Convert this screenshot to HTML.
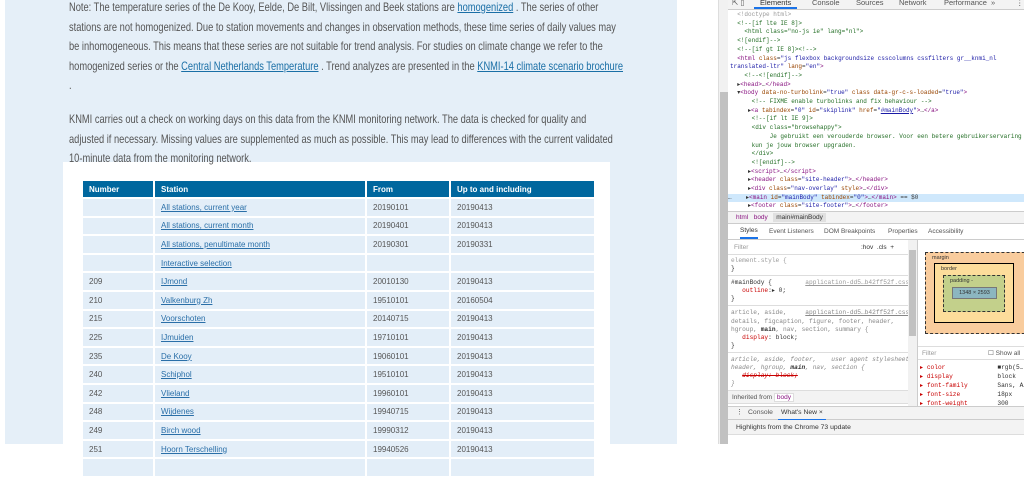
<!DOCTYPE html>
<html><head><meta charset="utf-8"><style>
*{margin:0;padding:0;box-sizing:border-box}
body{width:1024px;height:444px;overflow:hidden;background:#fff;position:relative;font-family:"Liberation Sans",sans-serif}
#page{position:absolute;left:5px;top:0;width:672px;height:444px;background:#e5eff8}
.p{position:absolute;left:64px;font-size:12px;line-height:19.6px;color:#555;white-space:nowrap;transform:scaleX(0.775);transform-origin:0 0;z-index:2}
a{color:#1a6fa6;text-decoration:underline}
#box{position:absolute;left:63px;top:162px;width:547px;height:290px;background:#fff}
table{position:absolute;left:18px;top:17px;border-collapse:collapse;font-size:8px;width:515px}
td,th{border:2px solid #fff;height:18.6px;padding:0 0 0 6px;text-align:left;background:#e3eef8;color:#555;white-space:nowrap}
th{background:#00679e;color:#fff;font-weight:bold;height:18px}
td a{color:#2a6fa8}
#sb{position:absolute;left:718px;top:0;width:10px;height:444px;background:#f1f1f1;border-left:1px solid #ddd}
#sb div{position:absolute;left:1px;top:92px;width:8px;height:352px;background:#c1c1c1}
#dt{position:absolute;left:728px;top:0;width:296px;height:444px;background:#fff;font-size:7.6px;color:#333;overflow:hidden}
.mono{font-family:"Liberation Mono",monospace}
.tabs{position:absolute;left:0;top:0;width:296px;height:10px;background:#f3f3f3;border-bottom:1px solid #ccc;color:#555;font-size:7.5px;line-height:6px;white-space:nowrap}
.el{position:absolute;left:2px;top:11px;width:296px;white-space:pre;line-height:8.7px;font-size:6px}
.tg{color:#881280}.at{color:#994500}.av{color:#1a1aa6}.cm{color:#236e25}.gr{color:#999}
.ab{position:absolute;width:296px;background:#f3f3f3;border-top:1px solid #ccc;border-bottom:1px solid #ccc}
.sp{font-size:6.2px}
</style></head><body>
<div id="page">
<div class="p" style="top:-2px">Note: The temperature series of the De Kooy, Eelde, De Bilt, Vlissingen and Beek stations are <a>homogenized</a> . The series of other<br>stations are not homogenized. Due to station movements and changes in observation methods, these time series of daily values may<br>be inhomogeneous. This means that these series are not suitable for trend analysis. For studies on climate change we refer to the<br>homogenized series or the <a>Central Netherlands Temperature</a> . Trend analyzes are presented in the <a>KNMI-14 climate scenario brochure</a><br>.</div>
<div class="p" style="top:110px">KNMI carries out a check on working days on this data from the KNMI monitoring network. The data is checked for quality and<br>adjusted if necessary. Missing values are supplemented as much as possible. This may lead to differences with the current validated<br>10-minute data from the monitoring network.</div>
</div>
<div id="box"><table>
<tr><th style="width:72px">Number</th><th style="width:212px">Station</th><th style="width:84px">From</th><th>Up to and including</th></tr>
<tr><td></td><td><a>All stations, current year</a></td><td>20190101</td><td>20190413</td></tr>
<tr><td></td><td><a>All stations, current month</a></td><td>20190401</td><td>20190413</td></tr>
<tr><td></td><td><a>All stations, penultimate month</a></td><td>20190301</td><td>20190331</td></tr>
<tr><td></td><td><a>Interactive selection</a></td><td></td><td></td></tr>
<tr><td>209</td><td><a>IJmond</a></td><td>20010130</td><td>20190413</td></tr>
<tr><td>210</td><td><a>Valkenburg Zh</a></td><td>19510101</td><td>20160504</td></tr>
<tr><td>215</td><td><a>Voorschoten</a></td><td>20140715</td><td>20190413</td></tr>
<tr><td>225</td><td><a>IJmuiden</a></td><td>19710101</td><td>20190413</td></tr>
<tr><td>235</td><td><a>De Kooy</a></td><td>19060101</td><td>20190413</td></tr>
<tr><td>240</td><td><a>Schiphol</a></td><td>19510101</td><td>20190413</td></tr>
<tr><td>242</td><td><a>Vlieland</a></td><td>19960101</td><td>20190413</td></tr>
<tr><td>248</td><td><a>Wijdenes</a></td><td>19940715</td><td>20190413</td></tr>
<tr><td>249</td><td><a>Birch wood</a></td><td>19990312</td><td>20190413</td></tr>
<tr><td>251</td><td><a>Hoorn Terschelling</a></td><td>19940526</td><td>20190413</td></tr>
<tr><td></td><td></td><td></td><td></td></tr>
</table></div>
<div id="sb"><div></div></div>
<div id="dt">
<div class="tabs"><span style="position:absolute;left:4px">⇱ ▯</span><span style="position:absolute;left:26px;color:#333;border-bottom:2px solid #1a73e8;padding:0 6px 1px">Elements</span><span style="position:absolute;left:84px">Console</span><span style="position:absolute;left:128px">Sources</span><span style="position:absolute;left:171px">Network</span><span style="position:absolute;left:216px">Performance</span><span style="position:absolute;left:263px">»</span><span style="position:absolute;left:288px">⋮</span></div>
<div class="el mono"><span class="gr">  &lt;!doctype html&gt;</span>
<span class="cm">  &lt;!--[if lte IE 8]&gt;</span>
<span class="cm">    &lt;html class="no-js ie" lang="nl"&gt;</span>
<span class="cm">  &lt;![endif]--&gt;</span>
<span class="cm">  &lt;!--[if gt IE 8]&gt;&lt;!--&gt;</span>
  <span class="tg">&lt;html</span> <span class="at">class</span>=<span class="av">"js flexbox backgroundsize csscolumns cssfilters gr__knmi_nl</span>
<span class="av">translated-ltr"</span> <span class="at">lang</span>=<span class="av">"en"</span><span class="tg">&gt;</span>
<span class="cm">    &lt;!--&lt;![endif]--&gt;</span>
  ▸<span class="tg">&lt;head&gt;</span>…<span class="tg">&lt;/head&gt;</span>
  ▾<span class="tg">&lt;body</span> <span class="at">data-no-turbolink</span>=<span class="av">"true"</span> <span class="at">class data-gr-c-s-loaded</span>=<span class="av">"true"</span><span class="tg">&gt;</span>
<span class="cm">      &lt;!-- FIXME enable turbolinks and fix behaviour --&gt;</span>
     ▸<span class="tg">&lt;a</span> <span class="at">tabindex</span>=<span class="av">"0"</span> <span class="at">id</span>=<span class="av">"skiplink"</span> <span class="at">href</span>=<span class="av">"<u>#mainBody</u>"</span><span class="tg">&gt;</span>…<span class="tg">&lt;/a&gt;</span>
<span class="cm">      &lt;!--[if lt IE 9]&gt;</span>
<span class="cm">      &lt;div class="browsehappy"&gt;</span>
<span class="cm">           Je gebruikt een verouderde browser. Voor een betere gebruikerservaring</span>
<span class="cm">      kun je jouw browser upgraden.</span>
<span class="cm">      &lt;/div&gt;</span>
<span class="cm">      &lt;![endif]--&gt;</span>
     ▸<span class="tg">&lt;script&gt;</span>…<span class="tg">&lt;/script&gt;</span>
     ▸<span class="tg">&lt;header</span> <span class="at">class</span>=<span class="av">"site-header"</span><span class="tg">&gt;</span>…<span class="tg">&lt;/header&gt;</span>
     ▸<span class="tg">&lt;div</span> <span class="at">class</span>=<span class="av">"nav-overlay"</span> <span class="at">style</span><span class="tg">&gt;</span>…<span class="tg">&lt;/div&gt;</span>
<span style="background:#cfe8fc;display:inline-block;width:296px;margin-left:-2px">…    ▸<span class="tg">&lt;main</span> <span class="at">id</span>=<span class="av">"mainBody"</span> <span class="at">tabindex</span>=<span class="av">"0"</span><span class="tg">&gt;</span>…<span class="tg">&lt;/main&gt;</span> == $0</span>
     ▸<span class="tg">&lt;footer</span> <span class="at">class</span>=<span class="av">"site-footer"</span><span class="tg">&gt;</span>…<span class="tg">&lt;/footer&gt;</span></div>
<div class="ab" style="top:211px;height:13px;line-height:11px;font-size:6.5px;padding-left:8px"><span class="tg">html</span> &nbsp; <span class="tg">body</span> &nbsp; <span style="background:#e0e0e0;padding:1px 3px">main#mainBody</span></div>
<div style="position:absolute;left:0;top:225px;width:296px;height:15px;border-bottom:1px solid #ccc;line-height:14px;font-size:6.5px;color:#555;white-space:nowrap"><span style="position:absolute;left:12px;color:#333;border-bottom:2px solid #1a73e8;line-height:12px">Styles</span><span style="position:absolute;left:41px">Event Listeners</span><span style="position:absolute;left:96px">DOM Breakpoints</span><span style="position:absolute;left:160px">Properties</span><span style="position:absolute;left:200px">Accessibility</span></div>
<div style="position:absolute;left:0;top:240px;width:180px;height:166px;overflow:hidden;font-size:6.5px">
<div style="height:15px;background:#fff;border-bottom:1px solid #ddd;line-height:15px;color:#999;padding-left:6px">Filter<span style="position:absolute;left:133px;color:#333">:hov &nbsp;.cls &nbsp;+</span></div>
<div class="mono sp" style="line-height:8.1px;white-space:pre;padding:2px 0 2px 3px"><span class="gr">element.style {</span>
}</div>
<div class="mono sp" style="border-top:1px solid #ddd;line-height:8.1px;white-space:pre;padding:3px 0 2px 3px">#mainBody {         <u class="gr">application-dd5…b42ff52f.css:1</u>
   <span style="color:#c80000">outline</span>:▸ 0;
}</div>
<div class="mono sp" style="border-top:1px solid #ddd;line-height:8.1px;white-space:pre;padding:3px 0 2px 3px;color:#888">article, aside,     <u>application-dd5…b42ff52f.css:1</u>
details, figcaption, figure, footer, header,
hgroup, <b style="color:#333">main</b>, nav, section, summary {
   <span style="color:#c80000">display</span><span style="color:#333">: block;</span>
<span style="color:#333">}</span></div>
<div class="mono sp" style="border-top:1px solid #ddd;line-height:8.1px;white-space:pre;padding:3px 0 2px 3px;color:#888;font-style:italic">article, aside, footer,    user agent stylesheet
header, hgroup, <b style="color:#333">main</b>, nav, section {
   <s style="color:#c80000">display: block;</s>
}</div>
<div style="border-top:1px solid #ddd;background:#f3f3f3;height:13px;line-height:13px;padding-left:4px;color:#555">Inherited from <span style="background:#fff;border:1px solid #ddd;color:#881280;padding:0 2px">body</span></div>
<div class="mono sp" style="border-top:1px solid #ddd;padding:2px 0 0 3px;white-space:pre">body {              <u class="gr">application-dd5…b42ff52f.css:1</u></div>
</div>
<div style="position:absolute;left:180px;top:240px;width:9px;height:166px;background:#f1f1f1"><div style="position:absolute;left:1px;top:10px;width:7px;height:86px;background:#c1c1c1"></div></div>
<div style="position:absolute;left:189px;top:240px;width:107px;height:167px;border-left:1px solid #ccc">
<div style="position:absolute;left:7px;top:12px;width:110px;height:82px;background:#f9cc9d;border:1px dashed #333;font-size:5.5px;color:#333"><span style="position:absolute;left:6px;top:2px">margin</span>
<div style="position:absolute;left:8px;top:10px;width:80px;height:60px;background:#fddd9b;border:1px solid #000"><span style="position:absolute;left:6px;top:2px">border</span>
<div style="position:absolute;left:8px;top:11px;width:62px;height:37px;background:#c3d08b;border:1px dashed #333"><span style="position:absolute;left:6px;top:2px">padding -</span>
<div style="position:absolute;left:8px;top:11px;width:45px;height:12px;background:#8cb6c0;border:1px solid #777;text-align:center;line-height:10px">1348 × 2593</div></div></div></div>
<div style="position:absolute;left:0;top:106px;width:107px;height:14px;border-top:1px solid #ddd;border-bottom:1px solid #ddd;font-size:6.5px;color:#999;line-height:13px;padding-left:4px">Filter<span style="position:absolute;left:70px;color:#555">☐ Show all</span></div>
<div class="mono" style="position:absolute;left:2px;top:123px;font-size:6.2px;line-height:9px;white-space:pre;color:#c80000">▸ color              <span style="color:#333">■rgb(5…</span>
▸ display            <span style="color:#333">block</span>
▸ font-family        <span style="color:#333">Sans, A…</span>
▸ font-size          <span style="color:#333">18px</span>
▸ font-weight        <span style="color:#333">300</span></div>
</div>
<div class="ab" style="top:406px;height:14px;font-size:6.8px;line-height:12px;color:#555"><span style="position:absolute;left:8px">⋮</span><span style="position:absolute;left:20px">Console</span><span style="position:absolute;left:50px;color:#333;border-bottom:2px solid #1a73e8;padding:0 3px">What's New ×</span></div>
<div style="position:absolute;left:0;top:420px;width:296px;height:15px;background:#f3f3f3;border-bottom:1px solid #ddd;font-size:6.8px;line-height:15px;padding-left:8px">Highlights from the Chrome 73 update</div>
</div>
</body></html>
